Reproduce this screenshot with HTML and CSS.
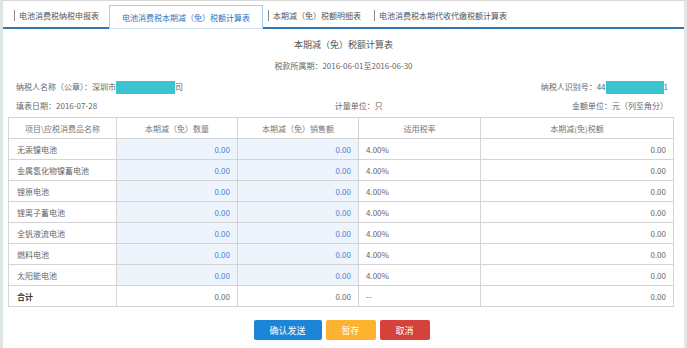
FILE: index.html
```html
<!DOCTYPE html>
<html lang="zh-CN">

<head>
    <meta charset="UTF-8">
    <meta name="viewport" content="width=device-width, initial-scale=1.0">
    <title>电池消费税本期减（免）税额计算表</title>
    <link rel="stylesheet" href="styles.css">
</head>

<body>
    <div class="page">
        <!-- Tabs -->
        <div class="tabs">
            <div class="tab"><span>电池消费税纳税申报表</span></div>
            <div class="tab active">电池消费税本期减（免）税额计算表</div>
            <div class="tab"><span>本期减（免）税额明细表</span></div>
            <div class="tab"><span>电池消费税本期代收代缴税额计算表</span></div>
        </div>

        <h1 class="title">本期减（免）税额计算表</h1>
        <p class="period">税款所属期：2016-06-01至2016-06-30</p>

        <div class="info-row">
            <div>纳税人名称（公章）：深圳市<span class="mask mask-name"></span>司</div>
            <div>纳税人识别号：44<span class="mask mask-id"></span>1</div>
        </div>
        <div class="info-row">
            <div class="info-col">填表日期：2016-07-28</div>
            <div class="info-col center">计量单位：只</div>
            <div class="info-col right">金额单位：元（列至角分）</div>
        </div>

        <!-- Calculation table -->
        <table class="calc-table">
            <colgroup>
                <col class="c1">
                <col class="c2">
                <col class="c3">
                <col class="c4">
                <col class="c5">
            </colgroup>
            <thead>
                <tr>
                    <th>项目\应税消费品名称</th>
                    <th>本期减（免）数量</th>
                    <th>本期减（免）销售额</th>
                    <th>适用税率</th>
                    <th>本期减(免)税额</th>
                </tr>
            </thead>
            <tbody id="rows"></tbody>
            <tfoot>
                <tr>
                    <td class="name total">合计</td>
                    <td class="num">0.00</td>
                    <td class="num">0.00</td>
                    <td>--</td>
                    <td class="num">0.00</td>
                </tr>
            </tfoot>
        </table>

        <div class="actions">
            <button class="btn btn-send">确认发送</button>
            <button class="btn btn-save">暂存</button>
            <button class="btn btn-cancel">取消</button>
        </div>
    </div>

    <script>
        // Battery types
        const items = ['无汞镍电池', '金属氢化物镍蓄电池', '锂原电池', '锂离子蓄电池', '全钒液流电池', '燃料电池', '太阳能电池'];
        const rows = document.getElementById('rows');

        items.forEach(name => {
            const row = document.createElement('tr');
            row.innerHTML = `
                <td class="name">${name}</td>
                <td class="num edit">0.00</td>
                <td class="num edit">0.00</td>
                <td>4.00%</td>
                <td class="num">0.00</td>
            `;
            rows.appendChild(row);
        });
    </script>
</body>

</html>
```

FILE: styles.css
```css
/* Global Styles */
:root {
    --tab-blue: #2f76b5;
    --text-color: #666;
    --border-color: #d4d4d4;
    --edit-bg: #edf4fc;
    --edit-text: #4a7fd0;
}

* {
    margin: 0;
    padding: 0;
    box-sizing: border-box;
    font-family: "Noto Sans CJK SC", "Noto Sans", sans-serif;
}

body {
    background-color: #fff;
    color: var(--text-color);
    font-size: 8px;
}

.page {
    width: 687px;
    min-height: 348px;
    border-top: 1px solid #d9d9d9;
    border-left: 3px solid #dde6e2;
    border-right: 3px solid #e6e6e6;
}

/* Tabs */
.tabs {
    display: flex;
    margin-top: 4px;
    padding-left: 8px;
    border-bottom: 2px solid var(--tab-blue);
    height: 24px;
}

.tab {
    height: 22px;
    line-height: 22px;
    padding: 0 10px 0 3px;
    color: #555;
    white-space: nowrap;
}

.tab span {
    border-left: 1px solid #888;
    padding-left: 4px;
}

.tab.active {
    padding: 0 12px;
    height: 24px;
    line-height: 24px;
    color: #2a78c2;
    background: #fff;
    border: 1px solid #a9cdee;
    border-bottom: 1px solid #cfe3f5;
}

.tab.active + .tab {
    padding-left: 5px;
}

/* Heading */
.title {
    font-size: 9px;
    font-weight: normal;
    text-align: center;
    line-height: 14px;
    margin-top: 9px;
    color: #555;
}

.period {
    text-align: center;
    line-height: 14px;
    margin-top: 7px;
}

.info-row {
    display: flex;
    justify-content: space-between;
    line-height: 14px;
    padding: 0 16px 0 13px;
    margin-top: 7px;
}

.info-row + .info-row {
    margin-top: 5px;
}

.info-col {
    flex: 1;
}

.info-col.center {
    padding-left: 152px;
}

.info-col.right {
    text-align: right;
}

.mask {
    display: inline-block;
    height: 13px;
    vertical-align: middle;
    background-color: #3ac4d2;
}

.mask-name {
    width: 59px;
}

.mask-id {
    width: 58px;
}

/* Table */
.calc-table {
    margin: 4px 0 0 5px;
    width: 665px;
    border-collapse: collapse;
    table-layout: fixed;
}

.c1 { width: 108px; }
.c2 { width: 121px; }
.c3 { width: 121px; }
.c4 { width: 122px; }
.c5 { width: 193px; }

th,
td {
    height: 21px;
    border: 1px solid var(--border-color);
    padding: 0 7px;
    text-align: left;
    font-weight: normal;
    white-space: nowrap;
}

th {
    text-align: center;
    color: #777;
}

td.name {
    padding-left: 8px;
}

td.total {
    color: #333;
    font-weight: bold;
}

td.num {
    text-align: right;
}

td.edit {
    background-color: var(--edit-bg);
    color: var(--edit-text);
}

/* Buttons */
.actions {
    display: flex;
    justify-content: center;
    gap: 4px;
    margin-top: 13px;
    padding-right: 4px;
}

.btn {
    height: 20px;
    border: none;
    border-radius: 2px;
    color: #fff;
    font-size: 9px;
    cursor: pointer;
}

.btn-send {
    width: 68px;
    background-color: #1b86d7;
}

.btn-save {
    width: 50px;
    background-color: #fdb230;
}

.btn-cancel {
    width: 50px;
    background-color: #d5413b;
}
```
